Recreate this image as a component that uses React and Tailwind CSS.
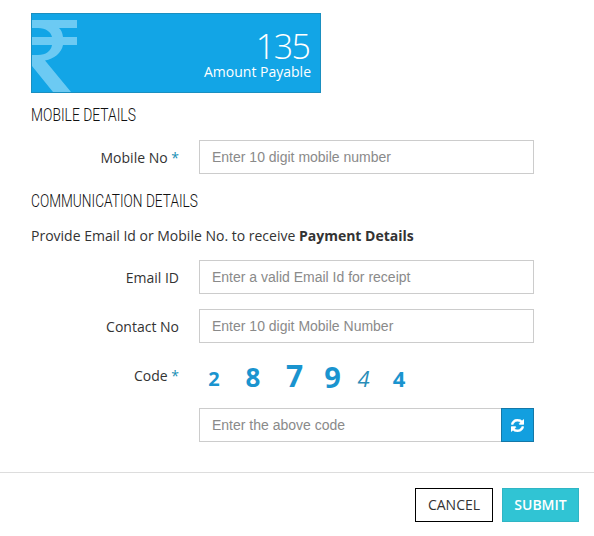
import React from "react";

const sans = "font-['Open_Sans',sans-serif]";
const arial = "font-['Liberation_Sans',Arial,sans-serif]";
const head = "font-['Roboto',sans-serif]";

function Star() {
  return <span className="text-[#1a8fb5]">*</span>;
}

function Field({ label, required, placeholder, className = "" }) {
  return (
    <div className={`flex items-center gap-5 ${className}`}>
      <label className={`w-[148px] text-right text-[14px] text-[#333] ${sans}`}>
        {label} {required && <Star />}
      </label>
      <input
        readOnly
        placeholder={placeholder}
        className={`h-[34px] w-[335px] border border-[#ccc] bg-white px-3 text-[14px] text-[#555] outline-none placeholder:text-[#8a8a8a] ${arial}`}
      />
    </div>
  );
}

function Digit({ children, className }) {
  return <span className={`w-[46px] text-center leading-none text-[#1a94cf] ${className}`}>{children}</span>;
}

export default function App() {
  return (
    <div className="h-[536px] w-[594px] overflow-hidden bg-white">
      <div className="pl-[31px] pt-[13px]">
        <div className={`relative flex h-[80px] w-[290px] flex-col items-end overflow-hidden border border-[#1a8fc0] bg-[#12a5e6] pr-[9px] text-white ${sans}`}>
          <svg className="absolute left-0 top-0" width="50" height="80" viewBox="0 0 50 80" fill="#6ccaf3">
            <path d="M0 6H45V14H27C29 16 30.500 18.500 31 23H45V31H31C29.500 39 22 45 13 46.500L39 78H21L0 52V41H6C14 41 19 37 20 31H0V23H20C19 18 14 14 6 14H0Z" />
          </svg>
          <div className="mr-[1.5px] mt-[15px] text-[34px] font-light leading-[34px] tracking-[-1.500px]">135</div>
          <div className="text-[14px] font-medium leading-[18px]">Amount Payable</div>
        </div>
        <h2 className={`mt-[11px] origin-left scale-x-[0.77] whitespace-nowrap text-[18px] font-light leading-[22px] text-[#111] ${head}`}>MOBILE DETAILS</h2>
      </div>

      <div className="pl-[31px]">
        <Field className="mt-[14px]" label="Mobile No" required placeholder="Enter 10 digit mobile number" />
        <h2 className={`mt-[16px] origin-left scale-x-[0.76] whitespace-nowrap text-[18px] font-light leading-[22px] text-[#111] ${head}`}>COMMUNICATION DETAILS</h2>
        <p className={`mt-[14px] text-[14px] leading-[20px] text-[#333] ${sans}`}>
          Provide Email Id or Mobile No. to receive <strong className="font-bold">Payment Details</strong>
        </p>
        <Field className="mt-[14px]" label="Email ID" placeholder="Enter a valid Email Id for receipt" />
        <Field className="mt-[15px]" label="Contact No" placeholder="Enter 10 digit Mobile Number" />

        <div className="mt-[17px] flex h-[32px] items-center gap-5">
          <label className={`-mt-[2px] w-[148px] text-right text-[14px] text-[#333] ${sans}`}>
            Code <Star />
          </label>
          <div className={`-ml-[8px] flex items-center ${sans}`}>
            <Digit className="translate-y-[3px] text-[20px] font-bold">2</Digit>
            <Digit className="-ml-[7px] translate-y-[1px] text-[26px] font-bold">8</Digit>
            <Digit className="-ml-[4.500px] text-[30px] font-bold">7</Digit>
            <Digit className="-ml-[8px] text-[29px] font-bold">9</Digit>
            <Digit className="-ml-[15px] translate-y-[2px] text-[22px] font-normal italic text-[#2a8db8]">4</Digit>
            <Digit className="-ml-[10.500px] translate-y-[2px] text-[22px] font-bold">4</Digit>
          </div>
        </div>

        <div className="mt-[16px] ml-[168px] flex w-[335px]">
          <input
            readOnly
            placeholder="Enter the above code"
            className={`h-[34px] min-w-0 flex-1 border border-r-0 border-[#ccc] bg-white px-3 text-[14px] outline-none placeholder:text-[#8a8a8a] ${arial}`}
          />
          <button className="flex h-[34px] w-[33px] items-center justify-center border border-[#1478a8] bg-[#129fdf]">
            <svg width="13" height="13" viewBox="0 0 1536 1536" fill="white" stroke="white" strokeWidth="60">
              <path d="M1511 928q0 5-1 7-64 268-268 434.500T764 1536q-146 0-282.500-55T238 1324l-129 129q-19 19-45 19t-45-19-19-45V960q0-26 19-45t45-19h448q26 0 45 19t19 45-19 45l-137 137q71 66 161 102t187 36q134 0 250-65t186-179q11-17 53-117 8-23 30-23h192q13 0 22.500 9.500t9.500 22.500zm25-800v448q0 26-19 45t-45 19h-448q-26 0-45-19t-19-45 19-45l138-138q-148-137-349-137-134 0-250 65T333 500q-11 17-53 117-8 23-30 23H51q-13 0-22.500-9.500T19 608v-7q65-268 270-434.500T768 0q146 0 284 55.500T1297 212l130-129q19-19 45-19t45 19 19 45z" />
            </svg>
          </button>
        </div>
      </div>

      <div className="mt-[30px] flex justify-end gap-[9px] border-t border-[#ddd] pr-[15px] pt-[15px]">
        <button className={`h-[34px] w-[78px] border border-black bg-white pb-[2px] text-[14px] text-[#333] ${sans}`}>CANCEL</button>
        <button className={`h-[34px] w-[77px] border border-[#2fb5c4] bg-[#30c4d4] pb-[2px] text-[14px] font-semibold text-white ${sans}`}>SUBMIT</button>
      </div>
    </div>
  );
}
